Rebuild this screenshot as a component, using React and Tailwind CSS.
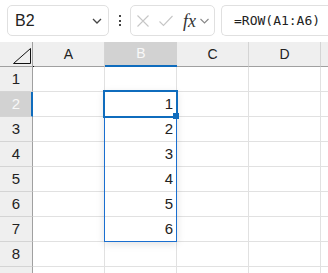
import React from "react";

const cols = ["A", "B", "C", "D", ""];
const rows = [1, 2, 3, 4, 5, 6, 7, 8, 9];
const values = { 2: "1", 3: "2", 4: "3", 5: "4", 6: "5", 7: "6" };

export default function App() {
  return (
    <div
      className="w-[328px] h-[273px] overflow-hidden bg-white relative"
      style={{ fontFamily: '"Liberation Sans", Arial, sans-serif' }}
    >
      {/* Toolbar */}
      <div className="h-[42px] flex items-start pt-[5px] bg-white">
        <div className="ml-[7px] w-[102px] h-[31px] border border-[#e0e0e0] rounded-[5px] flex items-center pl-[7px] pr-[5px]">
          <span className="text-[16px] text-[#222] flex-1 leading-none">B2</span>
          <svg width="10" height="6" viewBox="0 0 10 6" className="mr-[1px]">
            <path d="M1 1 L5 5 L9 1" fill="none" stroke="#444" strokeWidth="1.3" />
          </svg>
        </div>
        <div className="w-[21px] h-[31px] flex flex-col items-center justify-center gap-[2.5px]">
          <div className="w-[2px] h-[2px] bg-[#444]" />
          <div className="w-[2px] h-[2px] bg-[#444]" />
          <div className="w-[2px] h-[2px] bg-[#444]" />
        </div>
        <div className="w-[85px] h-[31px] border border-[#e0e0e0] rounded-[5px] flex items-center pl-[6px]">
          <svg width="12" height="12" viewBox="0 0 12 12">
            <path d="M0.5 0.5 L11.5 11.5 M11.5 0.5 L0.5 11.5" stroke="#c6c6c6" strokeWidth="1.1" fill="none" />
          </svg>
          <svg width="14" height="12" viewBox="0 0 14 12" className="ml-[10px]">
            <path d="M0.5 6.5 L4.5 10.5 L13.5 1" stroke="#c6c6c6" strokeWidth="1.1" fill="none" />
          </svg>
          <span
            className="ml-[10px] text-[18px] italic text-[#333] leading-none"
            style={{ fontFamily: '"Liberation Serif", "Times New Roman", serif' }}
          >
            fx
          </span>
          <svg width="9" height="6" viewBox="0 0 9 6" className="ml-[4px] mt-[1px]">
            <path d="M0.5 1 L4.5 5 L8.5 1" fill="none" stroke="#888" strokeWidth="1.1" />
          </svg>
        </div>
        <div className="ml-[6px] flex-1 h-[31px] border border-[#e0e0e0] rounded-l-[5px] border-r-0 flex items-center pl-[12px]">
          <span
            className="text-[13px] text-[#222] leading-none"
            style={{ fontFamily: '"DejaVu Sans Mono", "Liberation Mono", monospace' }}
          >
            =ROW(A1:A6)
          </span>
        </div>
      </div>

      {/* Grid */}
      <div className="grid grid-cols-[33px_72px_72px_72px_72px_40px] grid-rows-[25px] auto-rows-[25px]">
        {/* header row */}
        <div className="bg-[#efefef] border-r border-b border-[#a0a0a0] relative">
          <svg width="18" height="16" viewBox="0 0 18 16" className="absolute left-[13px] top-[6px]">
            <path d="M0.5 15.5 L17.5 0.5 L17.5 15.5 Z" fill="none" stroke="#111" strokeWidth="1" />
          </svg>
        </div>
        {cols.map((c, i) =>
          c === "B" ? (
            <div
              key={i}
              className="bg-[#d2d2d2] border-b-2 border-b-[#0f6cbd] flex items-center justify-center text-[14px] text-[#f8f8f8] pb-[1px]"
            >
              B
            </div>
          ) : (
            <div
              key={i}
              className="bg-[#efefef] border-b border-b-[#a0a0a0] border-r border-r-[#d4d4d4] flex items-center justify-center text-[14px] text-[#222]"
            >
              {c}
            </div>
          )
        )}
        {rows.map((r) => (
          <React.Fragment key={r}>
            {r === 2 ? (
              <div className="bg-[#d2d2d2] border-r-2 border-r-[#0f6cbd] border-b border-b-[#d4d4d4] flex items-center justify-center text-[15px] text-[#f8f8f8] pl-[1px]">
                {r}
              </div>
            ) : (
              <div className="bg-[#efefef] border-r border-r-[#a0a0a0] border-b border-b-[#d4d4d4] flex items-center justify-center text-[15px] text-[#222]">
                {r < 9 ? r : ""}
              </div>
            )}
            {cols.map((c, i) => (
              <div
                key={i}
                className="border-r border-b border-[#e1e1e1] flex items-center justify-end pr-[3px] text-[15px] text-[#222]"
              >
                {c === "B" ? values[r] || "" : ""}
              </div>
            ))}
          </React.Fragment>
        ))}
      </div>

      {/* Selection range */}
      <div className="absolute left-[104px] top-[91px] w-[73px] h-[151px] border border-[#1a6fd0] shadow-[0_2px_8px_rgba(0,0,0,0.12)] pointer-events-none" />
      {/* Active cell */}
      <div className="absolute left-[103px] top-[90px] w-[75px] h-[28px] border-2 border-[#0f6cbd] pointer-events-none" />
      {/* Fill handle */}
      <div className="absolute left-[173px] top-[113px] w-[6px] h-[6px] bg-[#0f6cbd] pointer-events-none" />
      {/* small corner dot */}
      <div className="absolute left-[33px] top-[66px] w-[1px] h-[1px] bg-black" />
    </div>
  );
}
